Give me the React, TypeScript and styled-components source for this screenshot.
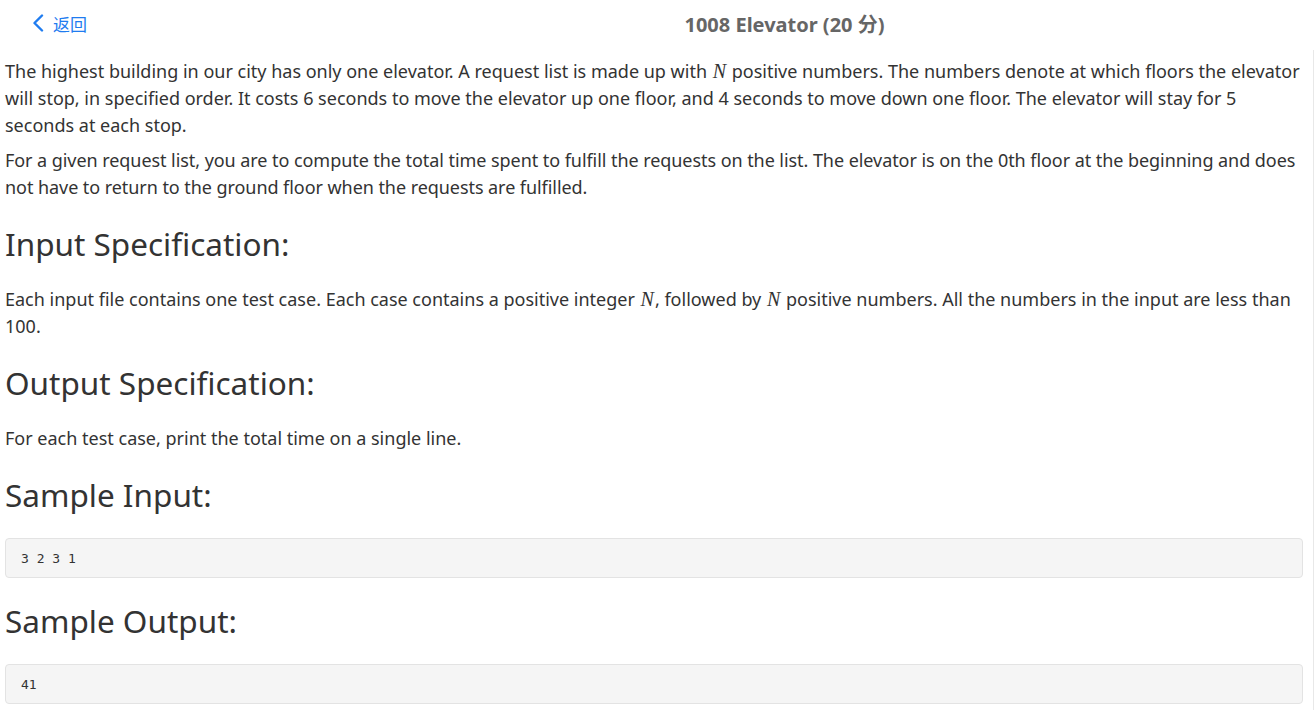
import React from "react";
import styled, { createGlobalStyle } from "styled-components";

const Global = createGlobalStyle`
  html, body { margin: 0; padding: 0; background: #fff; }
  body {
    font-family: "Noto Sans", "Noto Sans CJK SC", sans-serif;
    color: #333;
  }
`;

const Page = styled.div`
  width: 1315px;
  height: 710px;
  overflow: hidden;
  display: flex;
  flex-direction: column;
`;

const Header = styled.header`
  height: 50px;
  box-sizing: border-box;
  padding-bottom: 4px;
  display: flex;
  align-items: center;
  flex-shrink: 0;
`;

const Back = styled.a`
  width: 254px;
  display: flex;
  align-items: center;
  gap: 9px;
  padding-left: 32px;
  box-sizing: border-box;
  color: #1f7cf0;
  font-size: 17px;
  font-family: "Noto Sans CJK SC", sans-serif;
  text-decoration: none;
`;

const Title = styled.h1`
  flex: 1;
  margin: 0;
  text-align: center;
  font-size: 20px;
  font-weight: 700;
  color: #666;
  font-family: "Noto Sans", "Noto Sans CJK SC", sans-serif;
`;

const Content = styled.main`
  flex: 1;
  padding: 8px 10px 0 5px;
  border-right: 1px solid #e8e8e8;
  margin-right: 1px;
`;

const P = styled.p<{ $tight?: boolean }>`
  margin: 0 0 8px;
  font-size: 18px;
  line-height: 27px;
  letter-spacing: ${(p) => (p.$tight ? "-0.06px" : "0")};
`;

const H = styled.h2`
  margin: 21px 0 21px;
  font-size: 31.5px;
  font-weight: 400;
  line-height: 43px;
  color: #333;
`;

const M = styled.i`
  font-family: "Liberation Serif", serif;
  font-size: 20px;
  line-height: 1;
  padding: 0 1px;
`;

const Pre = styled.pre`
  margin: 22px 0 0;
  height: 40px;
  box-sizing: border-box;
  display: flex;
  align-items: center;
  padding: 0 15px;
  background: #f5f5f5;
  border: 1px solid #e3e3e3;
  border-radius: 4px;
  font-family: "DejaVu Sans Mono", monospace;
  font-size: 13px;
  color: #333;
`;

const Chevron = () => (
  <svg width="12" height="18" viewBox="0 0 12 18" fill="none">
    <path d="M10 1.5 L2.5 9 L10 16.5" stroke="#1f7cf0" strokeWidth="2.4" strokeLinecap="round" strokeLinejoin="round" />
  </svg>
);

export default function App() {
  return (
    <Page>
      <Global />
      <Header>
        <Back>
          <Chevron />
          返回
        </Back>
        <Title>1008 Elevator (20 分)</Title>
      </Header>
      <Content>
        <P>
          The highest building in our city has only one elevator. A request list is made up with <M>N</M> positive
          numbers. The numbers denote at which floors the elevator will stop, in specified order. It costs 6 seconds to
          move the elevator up one floor, and 4 seconds to move down one floor. The elevator will stay for 5 seconds at
          each stop.
        </P>
        <P $tight>
          For a given request list, you are to compute the total time spent to fulfill the requests on the list. The
          elevator is on the 0th floor at the beginning and does not have to return to the ground floor when the requests
          are fulfilled.
        </P>
        <H>Input Specification:</H>
        <P>
          Each input file contains one test case. Each case contains a positive integer <M>N</M>, followed by <M>N</M>{" "}
          positive numbers. All the numbers in the input are less than 100.
        </P>
        <H>Output Specification:</H>
        <P>For each test case, print the total time on a single line.</P>
        <H>Sample Input:</H>
        <Pre>3 2 3 1</Pre>
        <H>Sample Output:</H>
        <Pre>41</Pre>
      </Content>
    </Page>
  );
}
